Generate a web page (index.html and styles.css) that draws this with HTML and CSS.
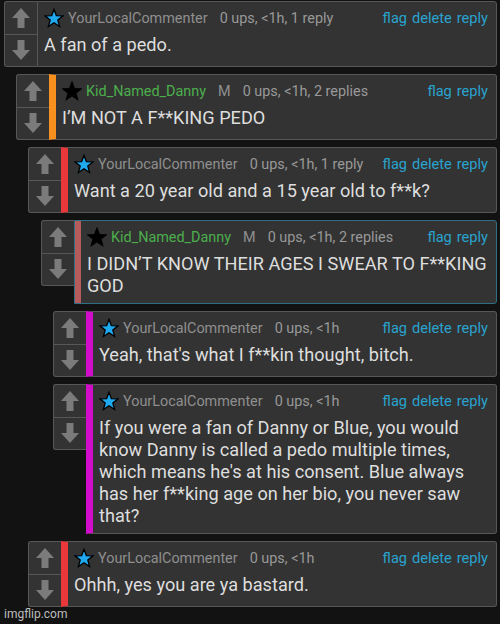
FILE: index.html
```html
<!DOCTYPE html>
<html>
<head>
<meta charset="utf-8">
<link rel="stylesheet" href="styles.css">
</head>
<body>
<svg width="0" height="0" class="defs">
  <defs>
    <polygon id="arrow" points="9,0 18,10 12.5,10 12.5,20 5.5,20 5.5,10 0,10"/>
    <polygon id="star" points="10,1.3 12.35,7.56 19.03,7.86 13.8,12.04 15.59,18.49 10,14.8 4.41,18.49 6.2,12.04 0.97,7.86 7.65,7.56"/>
  </defs>
</svg>
<div class="thread">

  <div class="comment">
    <div class="vote">
      <div class="vote-btn"><svg class="arrow" viewBox="0 0 18 20"><use href="#arrow"/></svg></div>
      <div class="vote-btn"><svg class="arrow down" viewBox="0 0 18 20"><use href="#arrow"/></svg></div>
    </div>
    <div class="content">
      <div class="head">
        <svg class="star blue" viewBox="0 0 20 20"><use href="#star"/></svg>
        <span class="name">YourLocalCommenter</span>
        <span class="meta">0 ups, &lt;1h, 1 reply</span>
        <span class="actions"><a>flag</a><a>delete</a><a>reply</a></span>
      </div>
      <div class="text">A fan of a pedo.</div>
    </div>
  </div>

  <div class="comment l1">
    <div class="vote">
      <div class="vote-btn"><svg class="arrow" viewBox="0 0 18 20"><use href="#arrow"/></svg></div>
      <div class="vote-btn"><svg class="arrow down" viewBox="0 0 18 20"><use href="#arrow"/></svg></div>
    </div>
    <div class="content bar bar-orange">
      <div class="head">
        <svg class="star black" viewBox="0 0 20 20"><use href="#star"/></svg>
        <span class="name green">Kid_Named_Danny</span>
        <span class="sex">M</span>
        <span class="meta">0 ups, &lt;1h, 2 replies</span>
        <span class="actions"><a>flag</a><a>reply</a></span>
      </div>
      <div class="text">I’M NOT A F**KING PEDO</div>
    </div>
  </div>

  <div class="comment l2">
    <div class="vote">
      <div class="vote-btn"><svg class="arrow" viewBox="0 0 18 20"><use href="#arrow"/></svg></div>
      <div class="vote-btn"><svg class="arrow down" viewBox="0 0 18 20"><use href="#arrow"/></svg></div>
    </div>
    <div class="content bar bar-red">
      <div class="head">
        <svg class="star blue" viewBox="0 0 20 20"><use href="#star"/></svg>
        <span class="name">YourLocalCommenter</span>
        <span class="meta">0 ups, &lt;1h, 1 reply</span>
        <span class="actions"><a>flag</a><a>delete</a><a>reply</a></span>
      </div>
      <div class="text">Want a 20 year old and a 15 year old to f**k?</div>
    </div>
  </div>

  <div class="comment l3">
    <div class="vote separate">
      <div class="vote-btn"><svg class="arrow" viewBox="0 0 18 20"><use href="#arrow"/></svg></div>
      <div class="vote-btn"><svg class="arrow down" viewBox="0 0 18 20"><use href="#arrow"/></svg></div>
    </div>
    <div class="content highlighted">
      <div class="head">
        <svg class="star black" viewBox="0 0 20 20"><use href="#star"/></svg>
        <span class="name green">Kid_Named_Danny</span>
        <span class="sex">M</span>
        <span class="meta">0 ups, &lt;1h, 2 replies</span>
        <span class="actions"><a>flag</a><a>reply</a></span>
      </div>
      <div class="text">I DIDN’T KNOW THEIR AGES I SWEAR TO F**KING GOD</div>
    </div>
  </div>

  <div class="comment l4">
    <div class="vote">
      <div class="vote-btn"><svg class="arrow" viewBox="0 0 18 20"><use href="#arrow"/></svg></div>
      <div class="vote-btn"><svg class="arrow down" viewBox="0 0 18 20"><use href="#arrow"/></svg></div>
    </div>
    <div class="content bar bar-magenta">
      <div class="head">
        <svg class="star blue" viewBox="0 0 20 20"><use href="#star"/></svg>
        <span class="name">YourLocalCommenter</span>
        <span class="meta">0 ups, &lt;1h</span>
        <span class="actions"><a>flag</a><a>delete</a><a>reply</a></span>
      </div>
      <div class="text">Yeah, that's what I f**kin thought, bitch.</div>
    </div>
  </div>

  <div class="comment l4">
    <div class="vote">
      <div class="vote-btn"><svg class="arrow" viewBox="0 0 18 20"><use href="#arrow"/></svg></div>
      <div class="vote-btn"><svg class="arrow down" viewBox="0 0 18 20"><use href="#arrow"/></svg></div>
    </div>
    <div class="content bar bar-magenta">
      <div class="head">
        <svg class="star blue" viewBox="0 0 20 20"><use href="#star"/></svg>
        <span class="name">YourLocalCommenter</span>
        <span class="meta">0 ups, &lt;1h</span>
        <span class="actions"><a>flag</a><a>delete</a><a>reply</a></span>
      </div>
      <div class="text">If you were a fan of Danny or Blue, you would know Danny is called a pedo multiple times, which means he's at his consent. Blue always has her f**king age on her bio, you never saw that?</div>
    </div>
  </div>

  <div class="comment l2">
    <div class="vote">
      <div class="vote-btn"><svg class="arrow" viewBox="0 0 18 20"><use href="#arrow"/></svg></div>
      <div class="vote-btn"><svg class="arrow down" viewBox="0 0 18 20"><use href="#arrow"/></svg></div>
    </div>
    <div class="content bar bar-red">
      <div class="head">
        <svg class="star blue" viewBox="0 0 20 20"><use href="#star"/></svg>
        <span class="name">YourLocalCommenter</span>
        <span class="meta">0 ups, &lt;1h</span>
        <span class="actions"><a>flag</a><a>delete</a><a>reply</a></span>
      </div>
      <div class="text">Ohhh, yes you are ya bastard.</div>
    </div>
  </div>

</div>
<div class="watermark">imgflip.com</div>
</body>
</html>
```

FILE: styles.css
```css
html, body {
  margin: 0;
  padding: 0;
}

body {
  width: 500px;
  height: 624px;
  overflow: hidden;
  position: relative;
  background: #121212;
  font-family: Roboto, "Noto Sans", "Liberation Sans", sans-serif;
}

.defs {
  position: absolute;
  width: 0;
  height: 0;
}

.thread {
  display: flex;
  flex-direction: column;
  gap: 7px;
  padding: 1px 3px 0 4px;
}

.comment {
  display: flex;
  align-items: flex-start;
}

.l1 { margin-left: 12px; }
.l2 { margin-left: 24px; }
.l3 { margin-left: 37px; }
.l4 { margin-left: 49px; }

.vote {
  flex: none;
  width: 33px;
  height: 66px;
  box-sizing: border-box;
  border: 1px solid #575757;
  border-right: none;
  border-radius: 3px 0 0 3px;
  background: #333;
  display: flex;
  flex-direction: column;
}

.vote-btn {
  flex: 1;
  display: flex;
  align-items: center;
  justify-content: center;
}

.vote-btn + .vote-btn {
  border-top: 1px solid #575757;
}

.arrow {
  width: 18px;
  height: 20px;
  fill: #7b7b7b;
}

.arrow.down {
  transform: rotate(180deg);
}

.content {
  flex: 1;
  min-width: 0;
  min-height: 66px;
  box-sizing: border-box;
  border: 1px solid #575757;
  border-radius: 0 3px 3px 0;
  background: #333;
  padding: 4px 8px 6px 6px;
}

.bar {
  border-left-width: 7px;
}

.bar-orange { border-left-color: #f7901e; }
.bar-red { border-left-color: #e8383a; }
.bar-magenta { border-left-color: #d10dc9; }

.content.highlighted {
  border-color: #2f6f86;
  box-shadow: inset 6px 0 0 #b45c5c;
  padding-left: 12px;
}

.head {
  display: flex;
  align-items: center;
  height: 24px;
  white-space: nowrap;
}

.star {
  width: 20px;
  height: 20px;
  flex: none;
  margin-right: 4px;
  stroke: #000;
  stroke-width: 1.3;
  stroke-linejoin: miter;
}

.star.blue { fill: #1fa9ef; }
.star.black { fill: #000; }

.name {
  font-size: 14.4px;
  color: #8f8f8f;
  margin-right: 12px;
}

.name.green {
  color: #4caf4c;
}

.sex {
  font-size: 14.4px;
  color: #8f8f8f;
  margin-right: 12px;
}

.meta {
  font-size: 14.4px;
  color: #999;
}

.actions {
  margin-left: auto;
  display: flex;
  gap: 5px;
  font-size: 14.6px;
}

.actions a {
  color: #29a3cf;
}

.text {
  margin-top: 4px;
  font-size: 18.15px;
  line-height: 22px;
  color: #dedede;
}

.watermark {
  position: absolute;
  left: 4px;
  bottom: 3px;
  font-size: 12px;
  color: #bdbdbd;
}
```
